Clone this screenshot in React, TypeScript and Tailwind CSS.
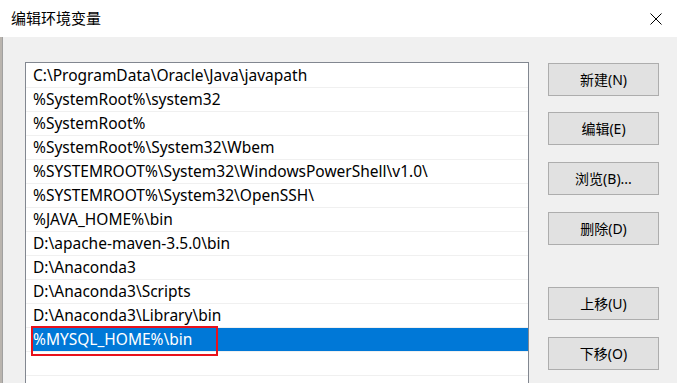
const paths = [
  "C:\\ProgramData\\Oracle\\Java\\javapath",
  "%SystemRoot%\\system32",
  "%SystemRoot%",
  "%SystemRoot%\\System32\\Wbem",
  "%SYSTEMROOT%\\System32\\WindowsPowerShell\\v1.0\\",
  "%SYSTEMROOT%\\System32\\OpenSSH\\",
  "%JAVA_HOME%\\bin",
  "D:\\apache-maven-3.5.0\\bin",
  "D:\\Anaconda3",
  "D:\\Anaconda3\\Scripts",
  "D:\\Anaconda3\\Library\\bin",
];

const font = "font-['Microsoft_YaHei_UI','Noto_Sans','Noto_Sans_CJK_SC',sans-serif]";

function Btn({ label, className = "" }: { label: string; className?: string }) {
  return (
    <div
      className={`w-[111px] h-[33px] flex items-center justify-center bg-[#e1e1e1] border border-[#adadad] text-[14px] text-black ${className}`}
    >
      {label}
    </div>
  );
}

export default function App() {
  return (
    <div className={`w-[677px] h-[383px] overflow-hidden bg-white flex flex-col ${font}`}>
      {/* title bar */}
      <div className="h-[37px] flex items-center justify-between shrink-0">
        <span className="pl-[11px] text-[15px] text-black">编辑环境变量</span>
        <svg width="12" height="12" viewBox="0 0 12 12" className="mr-[15px]">
          <path d="M0.5 0.5L11.5 11.5M11.5 0.5L0.5 11.5" stroke="#000" strokeWidth="1" fill="none" />
        </svg>
      </div>

      <div className="flex-1 bg-[#f0f0f0] flex">
        <div className="w-[2px] bg-[#b9b4ae] shrink-0" />
        <div className="w-[1px] bg-[#a0a0a0] shrink-0" />

        {/* list */}
        <div className="ml-[22px] mt-[25px] w-[504px] h-[400px] shrink-0 border border-[#828790] bg-white pt-[1px]">
          {paths.map((p) => (
            <div
              key={p}
              className="h-[24px] border-b border-[#f0f0f0] flex items-center pl-[7px] text-[15.5px] text-black whitespace-nowrap"
            >
              {p}
            </div>
          ))}
          <div className="relative h-[24px] border-b border-[#f0f0f0] flex items-center">
            <div className="ml-[7px] h-full flex-1 bg-[#0078d7] flex items-center text-[15.5px] text-white whitespace-nowrap">
              %MYSQL_HOME%\bin
            </div>
            <div className="absolute left-[5px] top-[-2px] w-[187px] h-[30px] border-2 border-[#e8111b]" />
          </div>
          <div className="h-[24px] border-b border-[#f0f0f0]" />
          <div className="h-[24px]" />
        </div>

        {/* buttons */}
        <div className="ml-[19px] mt-[26px] flex flex-col shrink-0">
          <Btn label="新建(N)" />
          <Btn label="编辑(E)" className="mt-[16px]" />
          <Btn label="浏览(B)..." className="mt-[17px]" />
          <Btn label="删除(D)" className="mt-[17px]" />
          <Btn label="上移(U)" className="mt-[42px]" />
          <Btn label="下移(O)" className="mt-[17px]" />
        </div>
      </div>
    </div>
  );
}
